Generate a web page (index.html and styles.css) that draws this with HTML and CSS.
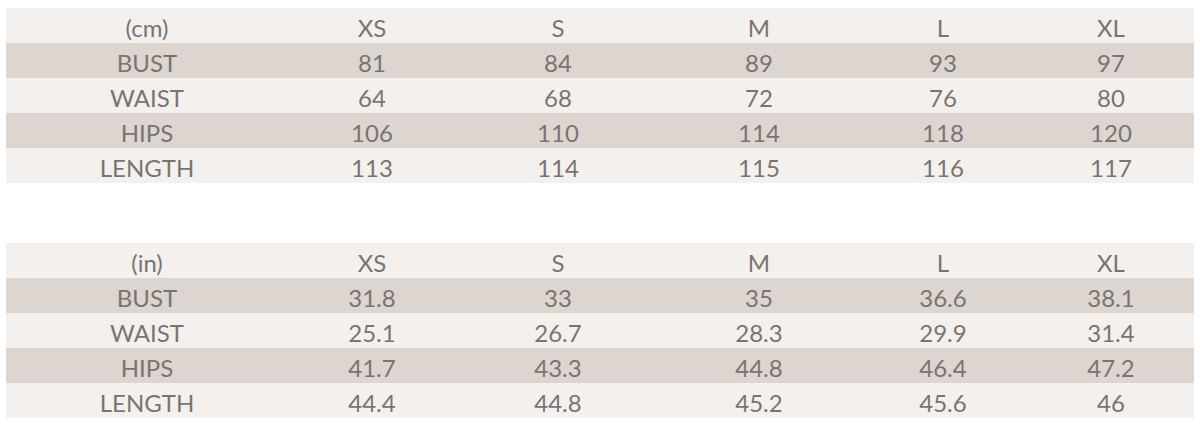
FILE: index.html
```html
<!DOCTYPE html>
<html>
<head>
<meta charset="utf-8">
<link rel="stylesheet" href="styles.css">
</head>
<body>
<div class="page">
  <div class="table">
    <div class="row light"><span>(cm)</span><span>XS</span><span>S</span><span>M</span><span>L</span><span>XL</span></div>
    <div class="row dark"><span>BUST</span><span>81</span><span>84</span><span>89</span><span>93</span><span>97</span></div>
    <div class="row light"><span>WAIST</span><span>64</span><span>68</span><span>72</span><span>76</span><span>80</span></div>
    <div class="row dark"><span>HIPS</span><span>106</span><span>110</span><span>114</span><span>118</span><span>120</span></div>
    <div class="row light"><span>LENGTH</span><span>113</span><span>114</span><span>115</span><span>116</span><span>117</span></div>
  </div>
  <div class="table">
    <div class="row light"><span>(in)</span><span>XS</span><span>S</span><span>M</span><span>L</span><span>XL</span></div>
    <div class="row dark"><span>BUST</span><span>31.8</span><span>33</span><span>35</span><span>36.6</span><span>38.1</span></div>
    <div class="row light"><span>WAIST</span><span>25.1</span><span>26.7</span><span>28.3</span><span>29.9</span><span>31.4</span></div>
    <div class="row dark"><span>HIPS</span><span>41.7</span><span>43.3</span><span>44.8</span><span>46.4</span><span>47.2</span></div>
    <div class="row light"><span>LENGTH</span><span>44.4</span><span>44.8</span><span>45.2</span><span>45.6</span><span>46</span></div>
  </div>
</div>
</body>
</html>
```
FILE: styles.css
```css
html, body {
  margin: 0;
  padding: 0;
  background: #ffffff;
}
.page {
  padding: 8px 6px 0 6px;
  width: 1188px;
  display: flex;
  flex-direction: column;
  gap: 60px;
  font-family: "Lato", "Open Sans", sans-serif;
  color: #7a7471;
}
.table {
  display: flex;
  flex-direction: column;
}
.row {
  display: grid;
  grid-template-columns: 282px 168px 204px 198px 170px 166px;
  height: 35px;
  align-items: center;
  font-size: 24px;
  line-height: 35px;
}
.row span {
  text-align: center;
  padding-top: 2px;
}
.light { background: #f4f0ed; }
.dark { background: #ddd5d0; }
```
